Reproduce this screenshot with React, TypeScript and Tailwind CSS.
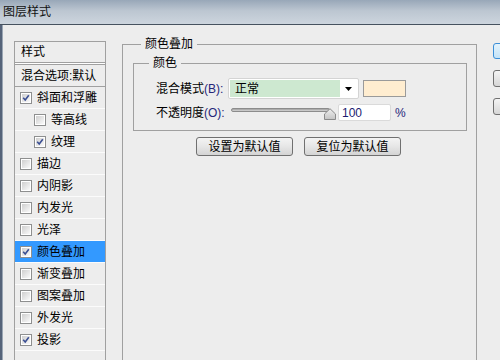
import React from 'react';

type Item = { label: string; checked?: boolean; sub?: boolean; active?: boolean };

const items: Item[] = [
  { label: '斜面和浮雕', checked: true },
  { label: '等高线', sub: true },
  { label: '纹理', checked: true, sub: true },
  { label: '描边' },
  { label: '内阴影' },
  { label: '内发光' },
  { label: '光泽' },
  { label: '颜色叠加', checked: true, active: true },
  { label: '渐变叠加' },
  { label: '图案叠加' },
  { label: '外发光' },
  { label: '投影', checked: true },
];

const CheckBox: React.FC<{ checked?: boolean }> = ({ checked }) => (
  <span className="w-[12px] h-[12px] border border-[#8e8f8f] bg-white p-px shrink-0 flex">
    <span className="flex-1 bg-gradient-to-br from-[#cfcfcf] to-[#fafafa] relative">
      {checked && (
        <svg className="absolute inset-0" width="8" height="8" viewBox="0 0 8 8">
          <path d="M1.2 3.8 L3.2 6 L6.8 1.2" fill="none" stroke="#3b4f93" strokeWidth="1.6" />
        </svg>
      )}
    </span>
  </span>
);

const ListRow: React.FC<{ item: Item }> = ({ item }) => (
  <div
    className={`h-[22px] border-b border-[#fbfbfb] flex items-center gap-[5px] ${
      item.sub ? 'pl-[19px]' : 'pl-[5px]'
    } ${item.active ? 'bg-[#3399ff]' : ''}`}
  >
    <CheckBox checked={item.checked} />
    <span className="leading-[16px]">{item.label}</span>
  </div>
);

const Button: React.FC<{ children: React.ReactNode }> = ({ children }) => (
  <button className="w-[97px] h-[19px] rounded-[3px] border border-[#707070] bg-gradient-to-b from-[#f4f4f4] via-[#e6e6e6] to-[#d4d4d4] flex items-center justify-center leading-[16px] text-[12px] text-black">
    {children}
  </button>
);

export default function App() {
  return (
    <div className="w-[500px] h-[360px] overflow-hidden bg-[#ededed] flex flex-col text-[12px] text-black font-['Liberation_Sans','Noto_Sans_CJK_SC',sans-serif]">
      {/* title bar */}
      <div className="h-[24px] shrink-0 flex items-center pl-[3px] bg-[linear-gradient(180deg,#98a7b8_0%,#bcc6d1_45%,#cdd5de_100%)]">
        <span className="leading-[16px] text-[#111]">图层样式</span>
      </div>

      <div className="flex-1 flex border-t border-[#46525f] min-h-0">
        <div className="w-[3px] shrink-0 bg-[#56647a] border-r border-[#9aa6b4]" />

        {/* style list */}
        <div className="w-[92px] shrink-0 ml-[11px] mt-[16px] h-[400px] border border-[#a0a0a0]">
          <div className="h-[21px] pl-[6px] flex items-center border-b border-[#a0a0a0]">
            <span className="leading-[16px]">样式</span>
          </div>
          <div className="h-px bg-white" />
          <div className="h-[23px] pl-[6px] flex items-center border-y border-[#a0a0a0]">
            <span className="leading-[16px]">混合选项:默认</span>
          </div>
          {items.map((it) => (
            <ListRow key={it.label} item={it} />
          ))}
        </div>

        {/* colour overlay group */}
        <fieldset className="w-[355px] shrink-0 ml-[16px] mt-[11px] h-[400px] border border-[#a0a0a0] min-w-0">
          <legend className="ml-[18px] px-[4px] leading-[16px]">颜色叠加</legend>

          <fieldset className="w-[334px] ml-[10px] mt-[3px] border border-[#a0a0a0] pb-[9px] min-w-0">
            <legend className="ml-[15px] px-[4px] leading-[16px]">颜色</legend>

            <div className="mt-[7px] flex items-center h-[21px] pl-[22px]">
              <span className="w-[72px] leading-[16px]">
                混合模式<span className="text-[#26267a]">(B):</span>
              </span>
              <div className="w-[131px] h-[21px] border border-[#d4d4d4] rounded-[2px] bg-white p-px flex">
                <div className="flex-1 bg-[#cde8d0] flex items-center pl-[5px] leading-[16px]">正常</div>
                <div className="w-[17px] flex items-center justify-center">
                  <svg width="7" height="4" viewBox="0 0 7 4">
                    <path d="M0 0 H7 L3.5 4 Z" fill="#000" />
                  </svg>
                </div>
              </div>
              <div className="ml-[4px] w-[43px] h-[17px] border border-[#9a9a9a] bg-[#ffedd0]" />
            </div>

            <div className="mt-[5px] flex items-center h-[17px] pl-[22px]">
              <span className="w-[72px] leading-[16px]">
                不透明度<span className="text-[#26267a]">(O):</span>
              </span>
              <div className="w-[108px] h-[17px] relative">
                <div className="absolute left-[3px] top-[4px] w-[99px] h-[4px] rounded-full border border-[#8c8c8c] bg-gradient-to-b from-[#9f9f9f] to-[#d6d6d6]" />
                <svg className="absolute left-[96px] top-[4px]" width="12" height="12" viewBox="0 0 12 12">
                  <defs>
                    <linearGradient id="thumb" x1="0" y1="0" x2="0" y2="1">
                      <stop offset="0" stopColor="#f0f0f0" />
                      <stop offset="1" stopColor="#c4c4c4" />
                    </linearGradient>
                  </defs>
                  <path d="M0.5 11.5 V6 L6 0.7 L11.5 6 V11.5 Z" fill="url(#thumb)" stroke="#8a8a8a" />
                </svg>
              </div>
              <div className="ml-[2px] w-[53px] h-[17px] border border-[#dadada] rounded-[2px] bg-white flex items-center pl-[3px] text-[#1c1c70] leading-[14px]">
                100
              </div>
              <span className="ml-[4px] leading-[16px] text-[#26267a]">%</span>
            </div>
          </fieldset>

          <div className="mt-[6px] pl-[73px] flex gap-[11px]">
            <Button>设置为默认值</Button>
            <Button>复位为默认值</Button>
          </div>
        </fieldset>

        {/* dialog buttons (cut off) */}
        <div className="ml-[16px] mt-[18px] flex flex-col gap-[11px] shrink-0">
          <div className="w-[60px] h-[16px] rounded-[3px] border border-[#3c8fd8] bg-gradient-to-b from-[#e4f3fc] to-[#c4e3f7]" />
          <div className="w-[60px] h-[17px] rounded-[3px] border border-[#707070] bg-gradient-to-b from-[#f4f4f4] to-[#d6d6d6]" />
          <div className="w-[60px] h-[17px] rounded-[3px] border border-[#707070] bg-gradient-to-b from-[#f4f4f4] to-[#d6d6d6]" />
        </div>
      </div>
    </div>
  );
}
